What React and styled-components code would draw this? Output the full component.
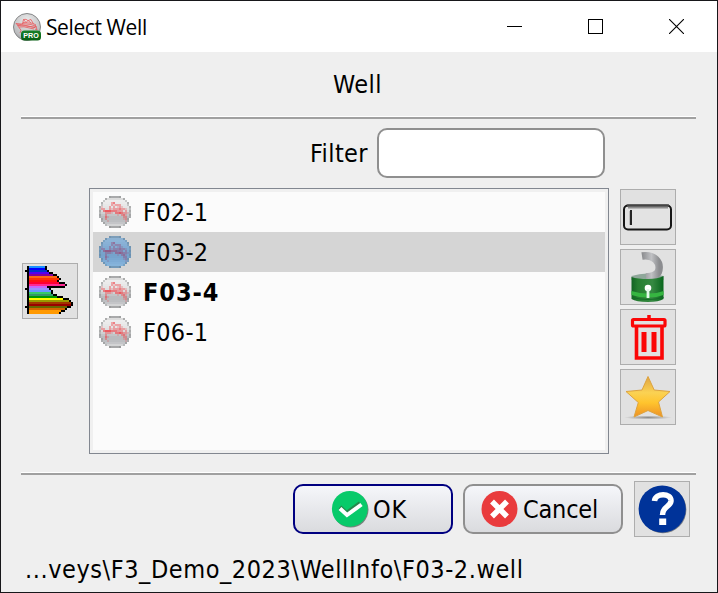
import React from "react";
import styled, { createGlobalStyle, css } from "styled-components";

const GlobalStyle = createGlobalStyle`
  *, *::before, *::after { box-sizing: border-box; }
  body { margin: 0; background: #efefef; }
`;

const Window = styled.main`
  display: flex;
  flex-direction: column;
  width: 718px;
  height: 593px;
  border: 1px solid #17171a;
  background: #efefef;
  color: #000;
  font-family: "DejaVu Sans Condensed", "DejaVu Sans", sans-serif;
  font-stretch: condensed;
  font-size: 25px;
  line-height: 40px;
  overflow: hidden;
`;

const TitleBar = styled.header`
  display: flex;
  align-items: center;
  height: 51px;
  padding-left: 12px;
  background: #fff;
  flex: none;
`;

const Title = styled.h1`
  margin: 0 auto 0 5px;
  font: 400 21px/30px "Open Sans", "Noto Sans", sans-serif;
  font-stretch: normal;
  letter-spacing: ${(p) => p.$track}px;
  white-space: nowrap;
`;

const Control = styled.button`
  display: grid;
  place-items: center;
  width: 81px;
  height: 51px;
  padding: 0;
  border: 0;
  background: transparent;
`;

const Label = styled.span`
  display: block;
  padding-top: 2px;
  white-space: nowrap;
  letter-spacing: ${(p) => p.$track || 0}px;
`;

const Heading = styled.div`
  display: flex;
  justify-content: center;
  height: 64px;
  padding-top: 11px;
  padding-right: 3px;
  flex: none;
`;

const Rule = styled.hr`
  height: 3px;
  width: 675px;
  margin: 0 0 0 20px;
  border: 0;
  border-top: 1px solid #fff;
  background: #a0a0a0;
  flex: none;
`;

const FilterRow = styled.label`
  display: flex;
  align-items: center;
  justify-content: flex-end;
  gap: 9px;
  height: 69px;
  padding-right: 112px;
  padding-bottom: 1px;
  flex: none;
`;

const FilterInput = styled.input`
  width: 228px;
  height: 50px;
  padding: 0 10px;
  border: 2px solid #8f8f8f;
  border-radius: 10px;
  background: #fff;
  font: inherit;
  outline: 0;
`;

const Content = styled.section`
  display: grid;
  grid-template-columns: 56px 520px 56px;
  column-gap: 11px;
  height: 266px;
  padding-left: 21px;
  flex: none;
`;

const Column = styled.div`
  display: flex;
  flex-direction: column;
  gap: 4px;
  padding-top: ${(p) => p.$top}px;
`;

const ToolButton = styled.button`
  display: grid;
  place-items: center;
  width: 56px;
  height: 56px;
  padding: 0 ${(p) => p.$nudge || 0}px ${(p) => p.$nudge || 0}px 0;
  border: 1px solid #adadad;
  background: #e1e1e1;
  flex: none;
`;

const WellList = styled.ul`
  margin: 0;
  padding: 3px;
  list-style: none;
  background: #fbfbfb;
  border: 1px solid #828790;
  box-shadow: inset 0 0 0 3px #f0f0f0;
`;

const WellRow = styled.li`
  display: flex;
  align-items: center;
  gap: 12px;
  height: 40px;
  padding-left: 6px;
  ${(p) => p.$selected && css`background: #d5d5d5;`}
  ${(p) => p.$bold && css`font-weight: 700;`}
`;

const Spacer = styled.div`
  height: 18px;
  flex: none;
`;

const Actions = styled.footer`
  display: flex;
  justify-content: flex-end;
  align-items: center;
  gap: 10px;
  height: 68px;
  padding-right: 27px;
  flex: none;
`;

const PushButton = styled.button`
  display: flex;
  align-items: center;
  gap: 4px;
  width: 160px;
  height: 50px;
  padding: 0 0 0 ${(p) => p.$inset}px;
  border: 2px solid ${(p) => (p.$primary ? "#000080" : "#8f8f8f")};
  border-radius: 10px;
  background: linear-gradient(#f5f6fa, #dadbde);
  color: #000;
  font: inherit;
`;

const HelpWrap = styled.div`
  margin-left: 1px;
`;

const Status = styled.div`
  padding-left: 24px;
  margin-top: 5px;
  line-height: 40px;
  flex: none;
`;

function AppIcon() {
  return (
    <svg width="28" height="28" viewBox="0 0 28 28">
      <defs>
        <radialGradient id="appBall" cx=".5" cy=".25" r=".8">
          <stop stopColor="#e9e9e9" /><stop offset=".75" stopColor="#bcbdbf" /><stop offset="1" stopColor="#8d8e90" />
        </radialGradient>
        <linearGradient id="proGreen" x2="0" y2="1"><stop stopColor="#168129" /><stop offset="1" stopColor="#065d12" /></linearGradient>
      </defs>
      <circle cx="14" cy="14" r="13.5" fill="url(#appBall)" stroke="#858687" />
      <g fill="none" stroke="#e9575a" strokeWidth=".8" strokeLinejoin="round">
        <path d="M3 10.5 8 11 10 10.7 18 11.5 23 13.3 22 14.5 12 12.8 5 12.5 3 10.5M4 12 8.5 11.5 22 14.5 22.5 11.5 20 10.8" />
        <path d="M9.5 11 10.5 6.5 13 6.3 15 7.6 18 6.5 20.5 11M10.5 6.5 13 9.5 15 7.6 18 9.8M10 9.5 20 10.3" />
        <path d="M4.5 12.5 8 17.2 7 20M23 13 24 17 22 16M6 14 11 13.8 21 16" />
      </g>
      <rect x="8" y="17.5" width="20" height="10" rx="3.5" fill="url(#proGreen)" />
      <text x="18.1" y="25.3" textAnchor="middle" textLength="15.5" lengthAdjust="spacingAndGlyphs" fontFamily="Liberation Sans" fontWeight="700" fontSize="7.8" fill="#fff">PRO</text>
    </svg>
  );
}

const ballRows = [[5, 11], [3, 13], [2, 14], [1, 15], [1, 15], [0, 16], [0, 16], [0, 16], [0, 16], [0, 16], [0, 16], [1, 15], [1, 15], [2, 14], [3, 13], [5, 11]];

const greyTones = ["#a9aaab", "#dcdcdc", "#ededed", "#ebebeb", "#e8e8e8", "#e5e5e5", "#e0e0e1", "#dadadb", "#cfd0d2", "#c2c4c6", "#b9bbbe", "#b9bbbe", "#bcbec1", "#c4c5c8", "#d3d4d5", "#a6a7a8"];
const blueTones = ["#7c9db9", "#8db2d3", "#8cb4d8", "#89b1d6", "#86afd5", "#82acd3", "#7fa9d1", "#7ba6cf", "#78a3cc", "#76a2cb", "#76a3cd", "#79a7d1", "#7dabd5", "#82b0d9", "#86b4db", "#7299b9"];

const hatRows = [
  "", "", "",
  "......23........",
  "......21222.....",
  ".1...2.2.121....",
  ".22..212223221..",
  "..3444333222.2..",
  "...2221.3343221.",
  "...2.....1.231..",
  "...31.......22..",
  "...2........12..",
  "....1........1..",
];

function WellIcon({ selected }) {
  const tones = selected ? blueTones : greyTones;
  const hat = selected ? "#94537f" : "#ee4a50";
  const rim = selected ? "#66879f" : "#929394";
  return (
    <svg width="32" height="32" viewBox="0 0 16 16" shapeRendering="crispEdges">
      {ballRows.map(([from, to], y) => (
        <g key={y}>
          <rect x={from} y={y} width={to - from} height="1" fill={tones[y]} />
          <rect x={from} y={y} width="1" height="1" fill={rim} opacity={y % 2 ? 0.65 : 0.4} />
          <rect x={to - 1} y={y} width="1" height="1" fill={rim} opacity={y % 2 ? 0.65 : 0.4} />
        </g>
      ))}
      {hatRows.map((row, y) =>
        [...row].map((level, x) =>
          level === "." ? null : (
            <rect key={`${x}-${y}`} x={x} y={y} width="1" height="1" fill={hat} opacity={level * 0.22} />
          )
        )
      )}
    </svg>
  );
}

const bands = [
  ["#1a91ff", 8, 1], ["#0000fd", 8, 1], ["#0033cc", 9, 1], ["#5500ee", 10, 2],
  ["#83009b", 12, 2], ["#ff6712", 14, 1], ["#ff3400", 15, 1], ["#ff1212", 14, 1],
  ["#ff0033", 15, 3], ["#ff2a93", 18, 1], ["#c966fa", 9, 9], ["#9b91ff", 10, 1],
  ["#6899ff", 11, 1], ["#34cc68", 11, 1], ["#339968", 12, 2], ["#009900", 14, 3],
  ["#ffff00", 17, 3], ["#999900", 20, 1], ["#a13500", 21, 1], ["#990000", 21, 1],
  ["#666600", 19, 2], ["#d06400", 18, 1], ["#ff9900", 16, 2], ["#ff9900", 15, 1],
];

function LogIcon() {
  return (
    <svg width="48" height="48" viewBox="0 0 24 24" shapeRendering="crispEdges">
      {bands.map(([color, end, edge], y) => (
        <g key={y}>
          <rect x="2" y={y} width={end} height="1" fill={color} />
          <rect x={end + 2} y={y} width={edge} height="1" />
        </g>
      ))}
      <path d="M1 0H2V24H1ZM0 2H1V3H0ZM0 11H1V12H0ZM0 20H1V21H0Z" />
    </svg>
  );
}

function RenameIcon() {
  return (
    <svg width="52" height="52" viewBox="0 0 52 52">
      <rect x="2" y="14.5" width="47" height="24" rx="4" fill="#e3e3e3" stroke="#161616" strokeWidth="2" />
      <path d="M6 16.5H46" stroke="#8c8c8c" strokeWidth="2" />
      <path d="M5 14.5H47" stroke="#444" strokeWidth="2" />
      <path d="M9 19V34" stroke="#252525" strokeWidth="2" />
      <path d="M7.5 20V34" stroke="#bbb" strokeWidth="1" />
    </svg>
  );
}

function UnlockIcon() {
  return (
    <svg width="52" height="52" viewBox="0 0 52 52">
      <defs>
        <linearGradient id="shackle"><stop stopColor="#8b8c8f" /><stop offset=".55" stopColor="#c0c1c4" /><stop offset="1" stopColor="#8c8d90" /></linearGradient>
        <linearGradient id="lockBody"><stop stopColor="#126323" /><stop offset=".2" stopColor="#267e31" /><stop offset=".65" stopColor="#368942" /><stop offset="1" stopColor="#09661d" /></linearGradient>
      </defs>
      <path d="M9.5 25Q25 20 41.5 25V29H9.5Z" fill="#8fa79a" />
      <path d="M20 5C33 3 38 12 37 18Q37 25 24 26" fill="none" stroke="url(#shackle)" strokeWidth="7.5" />
      <path d="M9.5 26Q16 28 26 28Q36 28 41.5 25V48Q37 51 26 51Q14 51 9.5 48Z" fill="url(#lockBody)" />
      <path d="M9.5 40Q18 42.5 26 42.5Q35 42.5 41.5 40V44Q35 46.5 26 46.5Q17 46.5 9.5 44Z" fill="#36b541" />
      <path d="M10 46.5Q18 48.5 26 48.5Q34 48.5 41.5 46.5" fill="none" stroke="#126d25" />
      <circle cx="26" cy="37" r="3.3" fill="#fff" />
      <path d="M26 38V47" stroke="#e4faeb" strokeWidth="2.8" />
    </svg>
  );
}

function TrashIcon() {
  return (
    <svg width="52" height="52" viewBox="0 0 52 52" fill="none" stroke="#fb0606">
      <path d="M27 4V8" strokeWidth="3.5" />
      <rect x="10.5" y="8.5" width="32.5" height="6.5" rx="1" strokeWidth="3.2" />
      <path d="M14.5 16V47H40V16" strokeWidth="3.6" />
      <path d="M22 21V41M32 21V41" strokeWidth="5" />
    </svg>
  );
}

function StarIcon() {
  return (
    <svg width="52" height="52" viewBox="0 0 52 52">
      <defs>
        <linearGradient id="starGold" x2="0" y2="1"><stop stopColor="#dfa442" /><stop offset=".4" stopColor="#fbd253" /><stop offset=".65" stopColor="#ffc42d" /><stop offset="1" stopColor="#ed9026" /></linearGradient>
        <radialGradient id="starShade"><stop stopColor="#777" stopOpacity=".8" /><stop offset="1" stopColor="#777" stopOpacity="0" /></radialGradient>
      </defs>
      <ellipse cx="26" cy="46.5" rx="24" ry="2" fill="url(#starShade)" />
      <path d="M26 5.5 32.2 19 48 20.5 36.5 31 40.5 46 26 39.5 12 46 16.3 31.5 4 20.5 20 19Z" fill="url(#starGold)" stroke="#dda33f" strokeLinejoin="round" />
    </svg>
  );
}

function OkIcon() {
  return (
    <svg width="38" height="38" viewBox="0 0 38 38">
      <circle cx="19.7" cy="19.8" r="17.8" fill="#566159" opacity=".75" />
      <circle cx="18.8" cy="18.8" r="17.9" fill="#08ca6a" />
      <path d="M9 17 15.5 23 29 13" fill="none" stroke="#26884c" strokeWidth="4" />
      <path d="M9 18.500 16 25 30.500 14.500" fill="none" stroke="#fff" strokeWidth="4" />
    </svg>
  );
}

function CancelIcon() {
  return (
    <svg width="38" height="38" viewBox="0 0 38 38">
      <circle cx="18.5" cy="19" r="18" fill="#e93b3d" />
      <path d="M11 11.5 26 26.5M26 11.5 11 26.5" stroke="#fff" strokeWidth="5.5" />
    </svg>
  );
}

function HelpIcon() {
  return (
    <svg width="50" height="50" viewBox="0 0 50 50">
      <circle cx="26" cy="25.8" r="23.4" fill="#777c86" />
      <circle cx="25.2" cy="25" r="23.6" fill="#003399" />
      <path d="M17.5 17C18 8.5 34.500 8.500 34 17C33.500 23 25.500 22 25.500 31" fill="none" stroke="#fff" strokeWidth="5.5" />
      <rect x="22.2" y="34.500" width="7" height="6.500" fill="#fff" />
    </svg>
  );
}

const wells = [
  { name: "F02-1", track: 0.3 },
  { name: "F03-2", track: 0.3, selected: true },
  { name: "F03-4", track: 0.95, bold: true },
  { name: "F06-1", track: 0.3 },
];

const tools = [
  ["Rename", RenameIcon],
  ["Unlock", UnlockIcon],
  ["Remove", TrashIcon],
  ["Set as default", StarIcon],
];

export default function App() {
  return (
    <Window>
      <GlobalStyle />
      <TitleBar>
        <AppIcon />
        <Title $track={-0.4}>Select Well</Title>
        <Control aria-label="Minimize">
          <svg width="15" height="15" shapeRendering="crispEdges"><path d="M0 7.5H15" stroke="#000" /></svg>
        </Control>
        <Control aria-label="Maximize">
          <svg width="15" height="15" shapeRendering="crispEdges"><rect x=".5" y=".5" width="14" height="14" fill="none" stroke="#000" /></svg>
        </Control>
        <Control aria-label="Close">
          <svg width="15" height="15"><path d="M0 0 15 15M15 0 0 15" stroke="#000" strokeWidth="1.1" /></svg>
        </Control>
      </TitleBar>
      <Heading><Label $track={0.5}>Well</Label></Heading>
      <Rule />
      <FilterRow>
        <Label $track={0.4}>Filter</Label>
        <FilterInput aria-label="Filter" />
      </FilterRow>
      <Content>
        <Column $top={75}>
          <ToolButton $nudge={2} aria-label="Log display"><LogIcon /></ToolButton>
        </Column>
        <WellList>
          {wells.map((w) => (
            <WellRow key={w.name} $selected={w.selected} $bold={w.bold}>
              <WellIcon selected={w.selected} />
              <Label $track={w.track}>{w.name}</Label>
            </WellRow>
          ))}
        </WellList>
        <Column $top={1}>
          {tools.map(([label, Icon]) => (
            <ToolButton key={label} aria-label={label}><Icon /></ToolButton>
          ))}
        </Column>
      </Content>
      <Spacer />
      <Rule />
      <Actions>
        <PushButton $primary $inset={36}><OkIcon /><Label $track={0.8}>OK</Label></PushButton>
        <PushButton $inset={16}><CancelIcon /><Label $track={-0.2}>Cancel</Label></PushButton>
        <HelpWrap><ToolButton aria-label="Help"><HelpIcon /></ToolButton></HelpWrap>
      </Actions>
      <Status><Label $track={0.57}>...veys\F3_Demo_2023\WellInfo\F03-2.well</Label></Status>
    </Window>
  );
}
